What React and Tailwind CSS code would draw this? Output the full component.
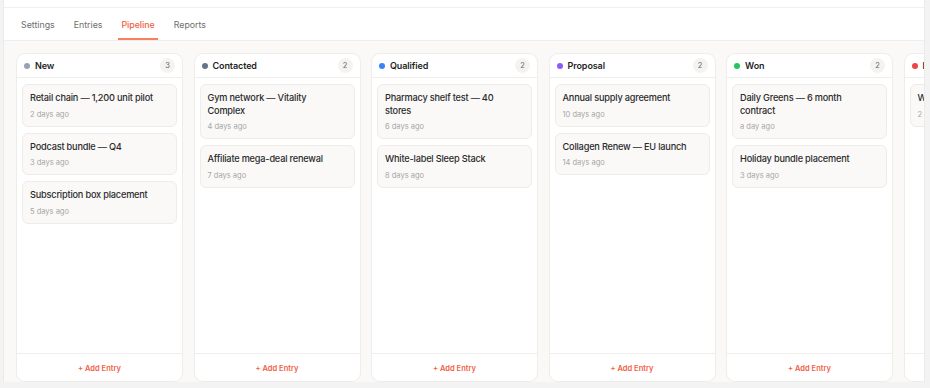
import React from 'react';

const tabs = ['Settings', 'Entries', 'Pipeline', 'Reports'];

const columns = [
  {
    name: 'New',
    dot: 'bg-[#94a3b8]',
    entries: [
      { title: 'Retail chain — 1,200 unit pilot', ago: '2 days ago' },
      { title: 'Podcast bundle — Q4', ago: '3 days ago' },
      { title: 'Subscription box placement', ago: '5 days ago' },
    ],
  },
  {
    name: 'Contacted',
    dot: 'bg-[#64748b]',
    entries: [
      { title: 'Gym network — Vitality Complex', ago: '4 days ago' },
      { title: 'Affiliate mega-deal renewal', ago: '7 days ago' },
    ],
  },
  {
    name: 'Qualified',
    dot: 'bg-[#3b82f6]',
    entries: [
      { title: 'Pharmacy shelf test — 40 stores', ago: '6 days ago' },
      { title: 'White-label Sleep Stack', ago: '8 days ago' },
    ],
  },
  {
    name: 'Proposal',
    dot: 'bg-[#8b5cf6]',
    entries: [
      { title: 'Annual supply agreement', ago: '10 days ago' },
      { title: 'Collagen Renew — EU launch', ago: '14 days ago' },
    ],
  },
  {
    name: 'Won',
    dot: 'bg-[#22c55e]',
    entries: [
      { title: 'Daily Greens — 6 month contract', ago: 'a day ago' },
      { title: 'Holiday bundle placement', ago: '3 days ago' },
    ],
  },
  {
    name: 'Lost',
    dot: 'bg-[#ef4444]',
    entries: [{ title: 'Wholesale trial', ago: '2 weeks ago' }],
  },
];

const Column = ({ column }) => (
  <div className="flex flex-col w-[167px] shrink-0 h-full bg-white border border-[#efedea] rounded-[9px]">
    <div className="flex items-center h-[24px] pl-[7px] pr-[7px] border-b border-[#f0eeeb]">
      <span className={`w-[6px] h-[6px] rounded-full ${column.dot}`} />
      <span className="ml-[5px] text-[9px] tracking-[-0.1px] font-semibold text-[#1f1f1f]">{column.name}</span>
      <span className="ml-auto flex items-center justify-center min-w-[15px] h-[15px] px-[4px] rounded-full bg-[#f4f3f1] text-[7.5px] text-[#666666]">
        {column.entries.length}
      </span>
    </div>
    <div className="flex-1 flex flex-col gap-[6px] px-[5px] pt-[6px]">
      {column.entries.map((entry, i) => (
        <div key={i} className="bg-[#faf9f8] border border-[#eeece9] rounded-[6px] pl-[7px] pr-[18px] pt-[7px] pb-[6px]">
          <div className="text-[9.2px] leading-[12.5px] tracking-[-0.2px] font-medium text-[#2b2b2b]">{entry.title}</div>
          <div className="mt-[5px] text-[7.5px] leading-[10px] text-[#a6a6a6]">{entry.ago}</div>
        </div>
      ))}
    </div>
    <div className="h-[28px] pt-[2px] border-t border-[#f0eeeb] flex items-center justify-center text-[7.5px] font-semibold text-[#f2603f]">
      + Add Entry
    </div>
  </div>
);

export default function App() {
  return (
    <div className="h-[388px] bg-[#f3f3f3] pl-[3px] pr-[5px] overflow-hidden" style={{ fontFamily: 'Inter, "Noto Sans", sans-serif' }}>
      <div className="h-[382px] flex flex-col bg-white border-x border-[#ebebeb]">
        <div className="h-[8px] border-b border-[#efefef] shrink-0" />
        <div className="flex gap-[13px] h-[33px] pl-[14px] border-b border-[#eeeeee] shrink-0">
          {tabs.map((tab) => (
            <div
              key={tab}
              className={`flex items-center px-[3px] pt-[3px] text-[8.8px] border-b-2 ${
                tab === 'Pipeline'
                  ? 'text-[#f0603f] border-[#f7805f] font-medium'
                  : 'text-[#6e6e6e] border-transparent'
              }`}
            >
              {tab}
            </div>
          ))}
        </div>
        <div className="flex-1 min-h-0 bg-[#faf9f7] pl-[12px] pt-[12px] overflow-hidden">
          <div className="flex gap-[10.5px] h-full">
            {columns.map((column) => (
              <Column key={column.name} column={column} />
            ))}
          </div>
        </div>
      </div>
    </div>
  );
}
